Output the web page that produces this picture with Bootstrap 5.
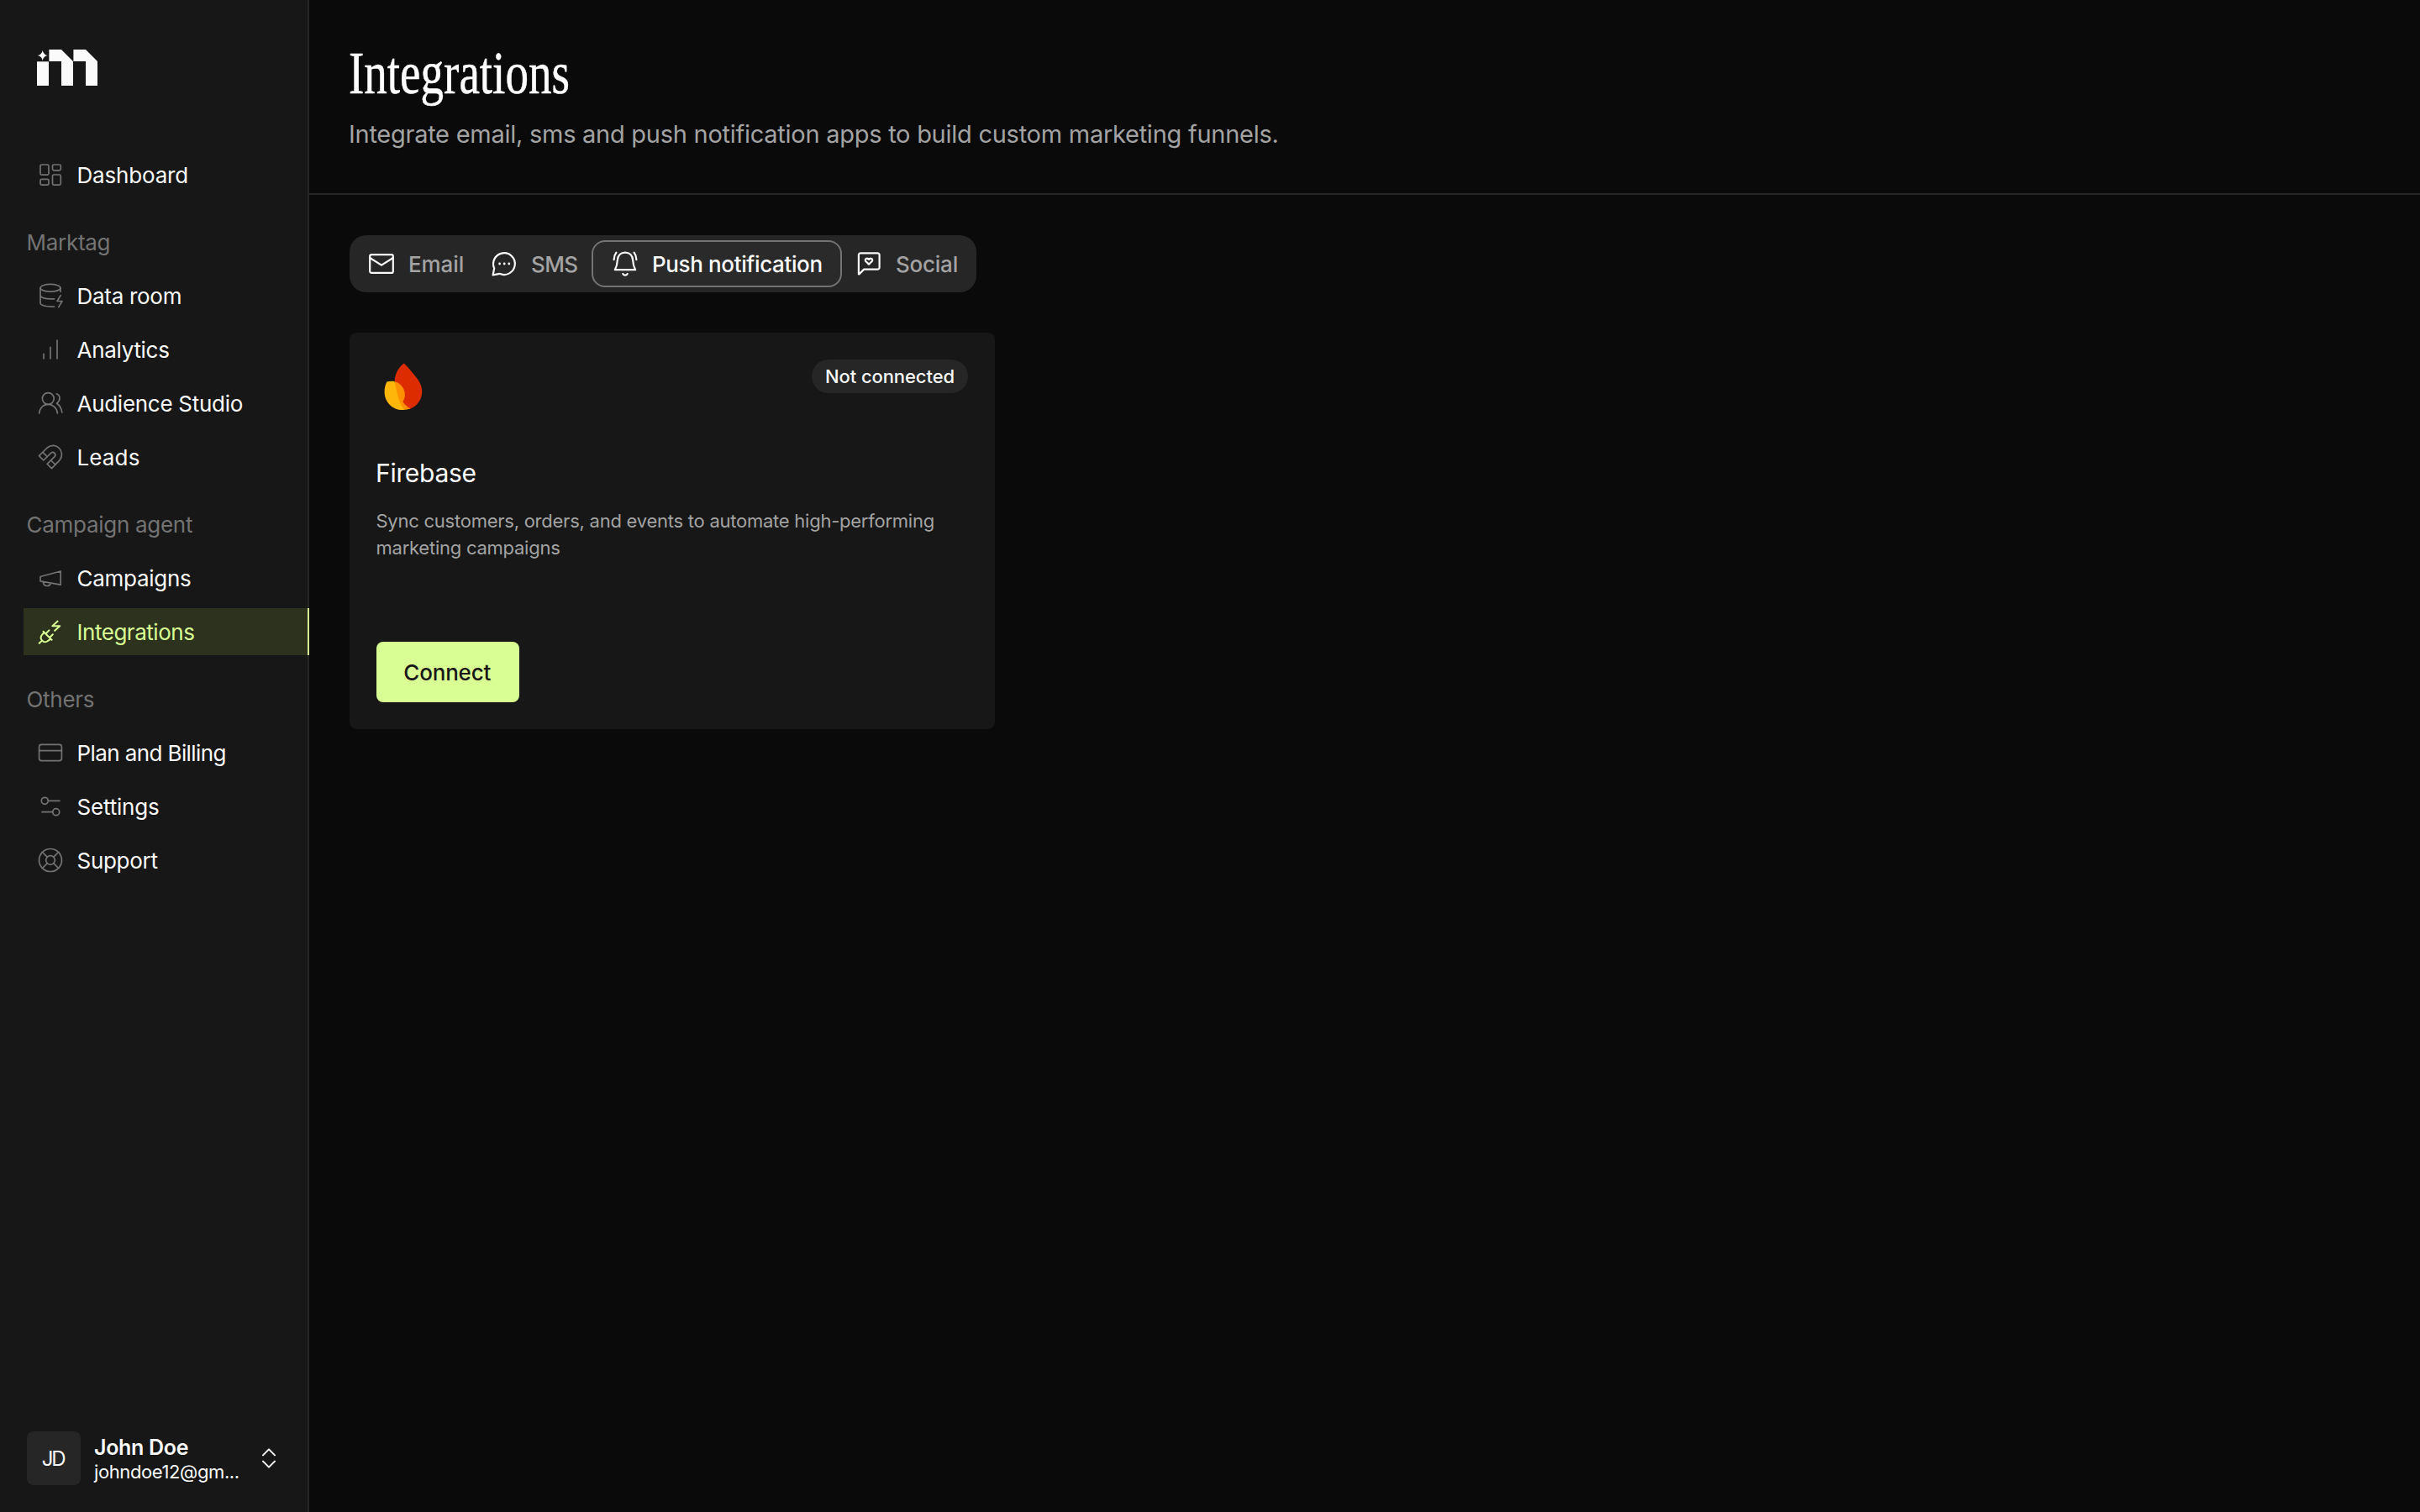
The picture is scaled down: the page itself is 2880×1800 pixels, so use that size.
<!DOCTYPE html>
<html lang="en" data-bs-theme="dark">
<head>
<meta charset="utf-8">
<meta name="viewport" content="width=device-width, initial-scale=1">
<title>Integrations</title>
<link href="https://cdn.jsdelivr.net/npm/bootstrap@5.3.0/dist/css/bootstrap.min.css" rel="stylesheet">
<style>
  body { background: #0a0a0a; color: #fafafa; font-family: Inter, "Liberation Sans", sans-serif; font-size: 26px; letter-spacing: -.011em; }
  svg { display: block; flex: none; fill: none; stroke: currentColor; stroke-linecap: round; stroke-linejoin: round; }

  .side { width: 368px; background: #171717; border-right: 2px solid #262626; padding: 59px 0 32px 28px; }
  .brand { margin: 0 0 78px 16px; }
  .side .nav-link { height: 56px; padding: 0 0 0 16px; gap: 15.5px; color: #fafafa; border-radius: 0; white-space: nowrap; }
  .side .nav-link svg { width: 32px; height: 32px; color: #737373; stroke-width: 1.7; }
  .side .nav-link.active { background: #2c321d; color: #d9ff94; margin-right: -2px; border-right: 2px solid #d9ff94; }
  .side .nav-link.active svg { color: inherit; stroke-width: 2; }
  .side .nav { gap: 8px; }
  .nav-title { height: 56px; line-height: 58px; margin-top: 16px; padding-left: 3.5px; color: #737373; }
  .ls-a { letter-spacing: -.007em; }
  .ls-b { letter-spacing: -.018em; }
  .ls-c { letter-spacing: .005em; }
  .ls-d { letter-spacing: -.023em; }

  .who { margin-left: 4px; padding-right: 38px; }
  .avatar { width: 64px; height: 64px; border-radius: 8px; background: #262626; font-size: 24px; letter-spacing: -.09em; padding: 2px 2px 0 0; }
  .who-name { font-size: 25px; font-weight: 600; line-height: 32px; letter-spacing: -.012em; }
  .who-mail { font-size: 22px; line-height: 26px; letter-spacing: -.018em; }

  .page-head { height: 232px; padding: 49px 48px 0 47px; border-bottom: 2px solid #262626; }
  .page-head h1 { font: 400 71px/76px "Liberation Serif", serif; letter-spacing: 0; transform: scaleX(.775); transform-origin: left; -webkit-text-stroke: .5px currentColor; }
  .page-head p { margin-top: 14px; font-size: 29px; line-height: 42px; color: #a3a3a3; letter-spacing: -.0091em; }
  .page-body { padding: 48px; }

  .tabs { background: #262626; border-radius: 20px; padding: 6px; font-weight: 500; }
  .tabs .nav-link { height: 56px; padding: 0 16px; gap: 16px; color: #a3a3a3; border-radius: 0; white-space: nowrap; }
  .tabs .nav-link svg { width: 32px; height: 32px; color: #fafafa; stroke-width: 2.2; }
  .tabs .nav-link.active { padding: 0 22px; color: #fafafa; background: #2a2a2a; border: 2px solid #737373; border-radius: 16px; }
  .w-email { width: 66px; letter-spacing: -.004em; } .w-sms { width: 56px; letter-spacing: -.025em; }
  .w-push { width: 202px; letter-spacing: -.014em; } .w-social { width: 74px; letter-spacing: -.009em; }

  .app-card { width: 768px; height: 472px; margin-top: 48px; padding: 32px; background: #171717; border: 0; border-radius: 8px; }
  .state { height: 40px; width: 186px; border-radius: 20px; background: #262626; font-size: 22px; font-weight: 500; line-height: 40px; letter-spacing: -.004em; }
  .app-card h2 { font-size: 30px; font-weight: 400; line-height: 38px; margin: 52px 0 22px -1px; letter-spacing: -.01em; }
  .app-card p { font-size: 22px; line-height: 32px; color: #a3a3a3; letter-spacing: -.0112em; margin-left: -.5px; }
  .btn-lime { width: 170px; height: 72px; border-radius: 8px; border: 0; background: #d9ff94; color: #171717; font-size: 26px; font-weight: 500; letter-spacing: -.007em; }
  .btn-lime span { margin-right: 1.5px; }
</style>
</head>
<body>
<div class="d-flex vh-100 overflow-hidden">

  <aside class="side d-flex flex-column flex-shrink-0">
    <svg class="brand" width="72" height="43" viewBox="0 0 72 43">
      <g fill="#fafafa" stroke="none">
        <path d="M0 14.3H14V43H0z"/>
        <path d="M14.4 0H29L43 14V43H29V14H14.4z"/>
        <path d="M43.4 0H58L72 14V43H58V14H43.4z"/>
        <path d="M6.7 1Q7.7 6.2 12.7 7.1Q7.7 8 6.7 13.2Q5.7 8 .7 7.1Q5.7 6.2 6.7 1z"/>
      </g>
    </svg>

    <nav class="nav flex-column flex-nowrap">
      <a class="nav-link d-flex align-items-center ls-a" href="#">
        <svg viewBox="0 0 32 32"><rect x="4" y="4" width="10" height="12.2" rx="1.6"/><rect x="18.5" y="4" width="9.8" height="6.8" rx="1.6"/><rect x="4" y="21.3" width="10" height="6.8" rx="1.6"/><rect x="18.5" y="16" width="9.8" height="12.2" rx="1.6"/></svg>
        Dashboard</a>

      <div class="nav-title">Marktag</div>
      <a class="nav-link d-flex align-items-center" href="#">
        <svg viewBox="0 0 32 32"><ellipse cx="16" cy="6.8" rx="12" ry="4.4"/><path d="M4 7V24.8C4 27.3 10 29.3 20.6 29M4 15.8C4.6 18.6 10.5 20.2 20.6 19.8M28 7v4.3M28.2 15.6L24 22.5h6L25.7 29.6"/></svg>
        Data room</a>
      <a class="nav-link d-flex align-items-center" href="#">
        <svg viewBox="0 0 32 32"><path d="M8 21.4v5.4M16 13.4v13.4M24 5v21.8"/></svg>
        Analytics</a>
      <a class="nav-link d-flex align-items-center" href="#">
        <svg viewBox="0 0 32 32"><circle cx="13.3" cy="10.5" r="6.9"/><path d="M2.7 28C3.2 21.5 7.8 17.4 13.3 17.4S24 21.5 24.4 28M23.3 4.8C28 6.8 28.4 12.2 23.6 16.2C27.2 18.6 29.2 22 29.8 27"/></svg>
        Audience Studio</a>
      <a class="nav-link d-flex align-items-center ls-c" href="#">
        <svg viewBox="0 0 32 32"><path d="M2.5 14.7L12.2 5C16.8 1.3 22.6 1.6 26.4 5.5S30.6 15.4 27 19.8L17.5 29.6L12.1 24.4L21 15.6C23.6 12.6 19.4 8.6 16.6 11.3L7.8 20z"/><path d="M6.9 10.4L12.3 15.7M16.5 20L21.9 25.2"/></svg>
        Leads</a>

      <div class="nav-title">Campaign agent</div>
      <a class="nav-link d-flex align-items-center" href="#">
        <svg viewBox="0 0 32 32"><path d="M28.2 8L4 14.5v5.3L28.2 24.2zM7.4 20.6C7.4 26.8 15.2 26.8 16.2 22.2"/></svg>
        Campaigns</a>
      <a class="nav-link active d-flex align-items-center ls-b" href="#">
        <svg viewBox="0 0 32 32"><path d="M24.6 3.6L18.4 9.3H27.2L21.2 14.8M7.6 15.7L17.6 25.7M8.7 16.8L6.3 19.4C4.2 21.7 4.2 24.6 6.2 26.7S11.4 28.6 13.6 26.6L16.4 24.4M6 26.6L2.7 29.8M10.6 18.2L14.4 14.4M15.3 22.8L18.8 19.2"/></svg>
        Integrations</a>

      <div class="nav-title">Others</div>
      <a class="nav-link d-flex align-items-center ls-d" href="#">
        <svg viewBox="0 0 32 32"><rect x="2.6" y="6.4" width="26.8" height="19.2" rx="2.6"/><path d="M2.6 13.6h26.8"/></svg>
        Plan and Billing</a>
      <a class="nav-link d-flex align-items-center ls-a" href="#">
        <svg viewBox="0 0 32 32"><circle cx="9.3" cy="9.3" r="4"/><path d="M13.3 9.3H27M6 22.7h12.7"/><circle cx="22.7" cy="22.7" r="4"/></svg>
        Settings</a>
      <a class="nav-link d-flex align-items-center" href="#">
        <svg viewBox="0 0 32 32"><circle cx="16" cy="16" r="13.5"/><circle cx="16" cy="16" r="5.3"/><path d="M6.5 6.5L12.3 12.3M25.5 6.5L19.7 12.3M6.5 25.5L12.3 19.7M25.5 25.5L19.7 19.7"/></svg>
        Support</a>
    </nav>

    <div class="who d-flex align-items-center mt-auto">
      <div class="avatar d-flex align-items-center justify-content-center flex-shrink-0">JD</div>
      <div class="flex-grow-1 ms-3 text-nowrap">
        <div class="who-name">John Doe</div>
        <div class="who-mail">johndoe12@gm...</div>
      </div>
      <svg width="16" height="24" viewBox="0 0 16 24" stroke-width="2"><path d="M1 8.4L8 1.4L15 8.4M1 15.6L8 22.6L15 15.6"/></svg>
    </div>
  </aside>

  <main class="flex-grow-1">
    <header class="page-head">
      <h1 class="m-0">Integrations</h1>
      <p class="mb-0">Integrate email, sms and push notification apps to build custom marketing funnels.</p>
    </header>

    <section class="page-body">
      <div class="tabs nav d-inline-flex flex-nowrap align-top">
        <a class="nav-link d-flex align-items-center" href="#">
          <svg viewBox="0 0 32 32"><rect x="2.2" y="5.1" width="27.6" height="21.8" rx="2"/><path d="M2.6 9.2L16 17.6L29.4 9.2"/></svg>
          <span class="w-email">Email</span></a>
        <a class="nav-link d-flex align-items-center" href="#">
          <svg viewBox="0 0 32 32"><path d="M2.6 29.4L4.2 21.4A12.9 12.9 0 1 1 10.6 27.8z"/><g fill="currentColor" stroke="none"><circle cx="10.6" cy="16" r="1.4"/><circle cx="16.2" cy="16" r="1.4"/><circle cx="21.8" cy="16" r="1.4"/></g></svg>
          <span class="w-sms">SMS</span></a>
        <a class="nav-link active d-flex align-items-center" href="#">
          <svg viewBox="0 0 32 32"><path d="M3.8 23.2C6.2 19 6.6 16.4 6.8 12C7.2 6.2 10.6 2.6 16 2.6S24.8 6.2 25.2 12C25.4 16.4 25.8 19 28.2 23.2zM2.6 11.2C2.7 7.8 3.6 5 5.4 2.6M29.4 11.2C29.3 7.8 28.4 5 26.6 2.6M13.3 28C14.5 30.2 17.5 30.2 18.7 28"/></svg>
          <span class="w-push">Push notification</span></a>
        <a class="nav-link d-flex align-items-center" href="#">
          <svg viewBox="0 0 32 32"><path d="M3.9 28.4V5.6A2.2 2.2 0 0 1 6.1 3.4H26.4A2.2 2.2 0 0 1 28.6 5.6V20.4A2.2 2.2 0 0 1 26.4 22.6H10.2L4.4 28.4z"/><path d="M16 16.6L12.3 13C10.6 11 13.6 8.3 16 10.9C18.4 8.3 21.4 11 19.7 13z"/></svg>
          <span class="w-social">Social</span></a>
      </div>

      <article class="card app-card">
        <div class="d-flex justify-content-between align-items-start">
          <svg width="64" height="64" viewBox="0 0 64 64">
            <g stroke="none">
              <path fill="#dd2c00" d="M32.8 4.4C26 9.6 22 16.6 21.7 25.8V52L40 58.8C48.6 55.4 54.3 47.2 54.3 38C54.3 31 50.8 25.2 46 19.4C42 14.4 37.4 8.6 32.8 4.4z"/>
              <path fill="#ff9100" d="M21.7 26.2C30 28.4 34.6 36.2 33.8 43.4C33.5 46 32.4 48.4 31.4 50.2C33.6 53.6 36.8 56.6 40.4 58.6C34 61 26 60.2 21 57z"/>
              <path fill="#ffb60a" d="M12.4 26.6C15.6 25.8 18.8 25.6 21.7 26.2C24.4 36.8 24.6 48.4 33.4 60C19.6 61 9.6 50.8 9.6 38.4C9.6 34 10.6 30 12.4 26.6z"/>
            </g>
          </svg>
          <span class="state text-center">Not connected</span>
        </div>
        <h2>Firebase</h2>
        <p class="mb-0">Sync customers, orders, and events to automate high-performing<br>marketing campaigns</p>
        <button class="btn btn-lime p-0 mt-auto align-self-start" type="button"><span>Connect</span></button>
      </article>
    </section>
  </main>
</div>
<script src="https://cdn.jsdelivr.net/npm/bootstrap@5.3.0/dist/js/bootstrap.bundle.min.js"></script>
</body>
</html>
